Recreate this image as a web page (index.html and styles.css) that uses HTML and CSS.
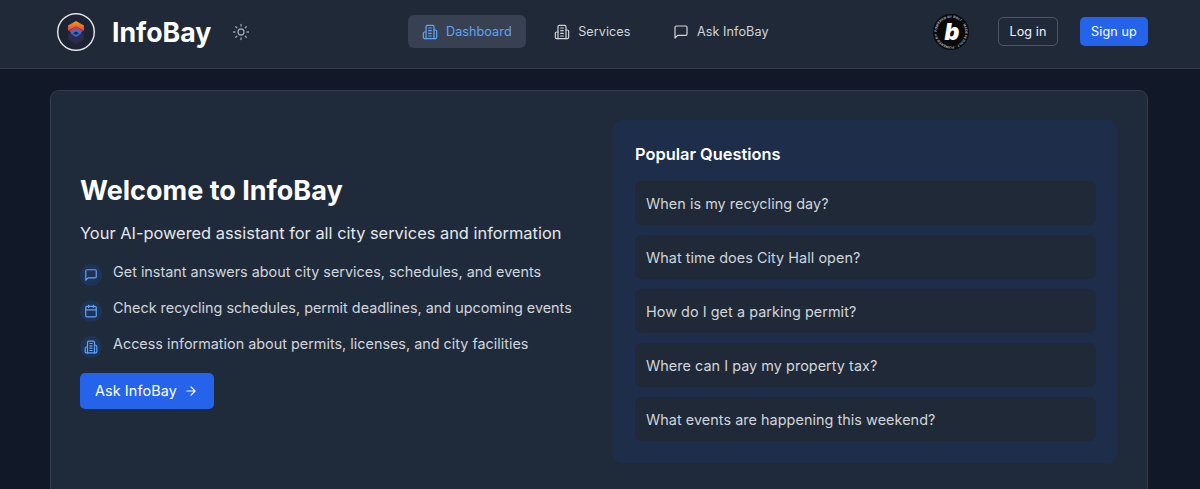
FILE: index.html
```html
<!DOCTYPE html>
<html lang="en">
<head>
    <meta charset="UTF-8">
    <meta name="viewport" content="width=device-width, initial-scale=1.0">
    <title>InfoBay</title>
    <link rel="stylesheet" href="styles.css">
</head>
<body>
    <nav class="navbar">
        <div class="brand">
            <svg class="brand-logo" viewBox="0 0 40 40">
                <defs>
                    <linearGradient id="logo-top" x1="0" y1="0" x2="0" y2="1">
                        <stop offset="0" stop-color="#f59e0b"/>
                        <stop offset="1" stop-color="#db3f5d"/>
                    </linearGradient>
                </defs>
                <circle cx="20" cy="20" r="18.3" fill="#1c2433" stroke="#dfe1e5" stroke-width="1.5"/>
                <path d="M20 18 L28 22.5 V27.5 L20 32 L12 27.5 V22.5 Z" fill="#2f2a4d"/>
                <path d="M20 9 L28 13.5 V19 L20 14.5 L12 19 V13.5 Z" fill="url(#logo-top)"/>
                <path d="M20 14.5 L27 19 L20 23.5 L13 19 Z" fill="#c2434f"/>
                <path d="M20 17 L26 21 L20 25 L14 21 Z" fill="#2f6fe0"/>
                <path d="M20 19.5 L23 21.3 L20 23 L17 21.3 Z" fill="#1e2a4a"/>
            </svg>
            <span class="brand-name">InfoBay</span>
            <svg class="theme-icon" viewBox="0 0 24 24">
                <circle cx="12" cy="12" r="4"/>
                <path d="M12 2v2M12 20v2M4.93 4.93l1.41 1.41M17.66 17.66l1.41 1.41M2 12h2M20 12h2M6.34 17.66l-1.41 1.41M19.07 4.93l-1.41 1.41"/>
            </svg>
        </div>

        <div class="nav-links">
            <a class="nav-link active">
                <svg class="icon" viewBox="0 0 24 24">
                    <path d="M6 22V4a2 2 0 0 1 2-2h8a2 2 0 0 1 2 2v18Z"/>
                    <path d="M6 12H4a2 2 0 0 0-2 2v6a2 2 0 0 0 2 2h2"/>
                    <path d="M18 9h2a2 2 0 0 1 2 2v9a2 2 0 0 1-2 2h-2"/>
                    <path d="M10 6h4M10 10h4M10 14h4M10 18h4"/>
                </svg>
                Dashboard
            </a>
            <a class="nav-link">
                <svg class="icon" viewBox="0 0 24 24">
                    <path d="M6 22V4a2 2 0 0 1 2-2h8a2 2 0 0 1 2 2v18Z"/>
                    <path d="M6 12H4a2 2 0 0 0-2 2v6a2 2 0 0 0 2 2h2"/>
                    <path d="M18 9h2a2 2 0 0 1 2 2v9a2 2 0 0 1-2 2h-2"/>
                    <path d="M10 6h4M10 10h4M10 14h4M10 18h4"/>
                </svg>
                Services
            </a>
            <a class="nav-link">
                <svg class="icon" viewBox="0 0 24 24">
                    <path d="M21 15a2 2 0 0 1-2 2H7l-4 4V5a2 2 0 0 1 2-2h14a2 2 0 0 1 2 2z"/>
                </svg>
                Ask InfoBay
            </a>
        </div>

        <div class="nav-actions">
            <svg class="bolt-badge" viewBox="0 0 36 36">
                <defs>
                    <path id="badge-ring" d="M18 18 m-14.2 0 a14.2 14.2 0 1 1 28.4 0 a14.2 14.2 0 1 1 -28.4 0"/>
                </defs>
                <circle cx="18" cy="18" r="18" fill="#0a0a0a"/>
                <text class="badge-ring-text"><textPath href="#badge-ring">POWERED BY BOLT · MADE IN BOLT · POWERED BY</textPath></text>
                <text class="badge-letter" x="19" y="25.5" text-anchor="middle">b</text>
            </svg>
            <button class="btn-login">Log in</button>
            <button class="btn-signup">Sign up</button>
        </div>
    </nav>

    <main class="page">
        <section class="hero">
            <div class="hero-left">
                <h1 class="hero-title">Welcome to InfoBay</h1>
                <p class="hero-sub">Your AI-powered assistant for all city services and information</p>
                <ul class="feature-list">
                    <li class="feature">
                        <span class="feature-icon">
                            <svg class="icon-sm" viewBox="0 0 24 24">
                                <path d="M21 15a2 2 0 0 1-2 2H7l-4 4V5a2 2 0 0 1 2-2h14a2 2 0 0 1 2 2z"/>
                            </svg>
                        </span>
                        Get instant answers about city services, schedules, and events
                    </li>
                    <li class="feature">
                        <span class="feature-icon">
                            <svg class="icon-sm" viewBox="0 0 24 24">
                                <rect x="3" y="4" width="18" height="18" rx="2"/>
                                <path d="M16 2v4M8 2v4M3 10h18"/>
                            </svg>
                        </span>
                        Check recycling schedules, permit deadlines, and upcoming events
                    </li>
                    <li class="feature">
                        <span class="feature-icon">
                            <svg class="icon-sm" viewBox="0 0 24 24">
                                <path d="M6 22V4a2 2 0 0 1 2-2h8a2 2 0 0 1 2 2v18Z"/>
                                <path d="M6 12H4a2 2 0 0 0-2 2v6a2 2 0 0 0 2 2h2"/>
                                <path d="M18 9h2a2 2 0 0 1 2 2v9a2 2 0 0 1-2 2h-2"/>
                                <path d="M10 6h4M10 10h4M10 14h4M10 18h4"/>
                            </svg>
                        </span>
                        Access information about permits, licenses, and city facilities
                    </li>
                </ul>
                <button class="btn-ask">
                    Ask InfoBay
                    <svg class="icon-sm" viewBox="0 0 24 24">
                        <path d="M5 12h14M12 5l7 7-7 7"/>
                    </svg>
                </button>
            </div>

            <div class="questions">
                <h2 class="questions-title">Popular Questions</h2>
                <div class="question">When is my recycling day?</div>
                <div class="question">What time does City Hall open?</div>
                <div class="question">How do I get a parking permit?</div>
                <div class="question">Where can I pay my property tax?</div>
                <div class="question">What events are happening this weekend?</div>
            </div>
        </section>
    </main>
</body>
</html>
```

FILE: styles.css
```css
* { margin: 0; padding: 0; box-sizing: border-box; }

html, body {
    height: 489px;
    overflow: hidden;
}

body {
    background: #111827;
    color: #f3f4f6;
    font-family: 'Inter', 'Liberation Sans', sans-serif;
}

svg {
    fill: none;
    stroke: currentColor;
    stroke-width: 2;
    stroke-linecap: round;
    stroke-linejoin: round;
    flex-shrink: 0;
}

.navbar {
    height: 69px;
    display: flex;
    align-items: center;
    padding: 0 52px 5px 56px;
    background: #1f2937;
    border-bottom: 1px solid #323d4e;
}

.brand {
    width: 352px;
    display: flex;
    align-items: center;
}

.brand-logo {
    width: 40px;
    height: 40px;
    stroke: none;
}

.brand-name {
    margin-left: 16px;
    font-size: 26.7px;
    font-weight: 700;
    color: #ffffff;
}

.theme-icon {
    width: 18px;
    height: 18px;
    margin-left: 21px;
    color: #9ca3af;
    stroke-width: 1.7;
}

.nav-links {
    flex: 1;
    display: flex;
    align-items: center;
    gap: 14.5px;
}

.nav-link {
    display: flex;
    align-items: center;
    gap: 8px;
    height: 33px;
    padding: 0 14px;
    border-radius: 6px;
    font-size: 12.6px;
    font-weight: 400;
    letter-spacing: 0.08px;
    color: #d1d5db;
}

.nav-link.active {
    background: #374151;
    color: #60a5fa;
}

.icon {
    width: 16px;
    height: 16px;
    stroke-width: 1.8;
}

.icon-sm {
    width: 14px;
    height: 14px;
}

.nav-actions {
    display: flex;
    align-items: center;
}

.bolt-badge {
    width: 36px;
    height: 36px;
    stroke: none;
    margin-right: 29px;
}

.badge-ring-text {
    font-family: 'Liberation Sans', sans-serif;
    font-size: 3.4px;
    font-weight: 700;
    fill: #b8bcc2;
}

.badge-letter {
    font-family: 'Inter', sans-serif;
    font-size: 23px;
    font-weight: 900;
    font-style: italic;
    fill: #ffffff;
}

.btn-login, .btn-signup {
    height: 29px;
    border-radius: 5px;
    font-family: inherit;
    font-size: 12.6px;
    font-weight: 400;
    letter-spacing: 0.12px;
}

.btn-login {
    width: 60px;
    background: transparent;
    border: 1px solid #4b5563;
    color: #f3f4f6;
}

.btn-signup {
    width: 68px;
    margin-left: 22px;
    background: #2563eb;
    border: none;
    color: #ffffff;
}

.page {
    padding: 21px 52px 0 50px;
}

.hero {
    height: 420px;
    display: flex;
    justify-content: space-between;
    padding: 29px 30px 0 29px;
    background: #1f2b3b;
    border: 1px solid #323d4e;
    border-radius: 9px;
}

.hero-left {
    height: 343px;
    display: flex;
    flex-direction: column;
    justify-content: center;
    align-items: flex-start;
}

.hero-title {
    font-size: 27px;
    line-height: 33px;
    font-weight: 700;
    color: #ffffff;
    margin-bottom: 16px;
}

.hero-sub {
    font-size: 16.4px;
    line-height: 20px;
    color: #e5e7eb;
    margin-bottom: 18px;
}

.feature-list {
    list-style: none;
    margin-bottom: 4px;
}

.feature {
    display: flex;
    align-items: flex-start;
    gap: 11px;
    height: 36px;
    font-size: 14.4px;
    line-height: 22px;
    color: #d1d5db;
}

.feature-icon {
    width: 22px;
    height: 22px;
    margin-top: 3px;
    display: flex;
    align-items: center;
    justify-content: center;
    border-radius: 50%;
    background: #1e3355;
    color: #60a5fa;
}

.btn-ask {
    display: flex;
    align-items: center;
    gap: 7px;
    height: 36px;
    padding: 0 16px 1px 15px;
    border: none;
    border-radius: 5px;
    background: #2563eb;
    color: #ffffff;
    font-family: inherit;
    font-size: 14.4px;
    font-weight: 400;
    letter-spacing: 0.1px;
}

.questions {
    width: 504px;
    height: 343px;
    padding: 21px 21px 0 22px;
    background: #1e2d4a;
    border-radius: 9px;
}

.questions-title {
    font-size: 16.4px;
    font-weight: 600;
    color: #ffffff;
    margin: 3px 0 17px;
}

.question {
    height: 44px;
    display: flex;
    align-items: center;
    padding: 0 11px;
    margin-bottom: 10px;
    border-radius: 7px;
    background: #1f2937;
    font-size: 14.4px;
    letter-spacing: 0.05px;
    color: #d1d5db;
}
```
